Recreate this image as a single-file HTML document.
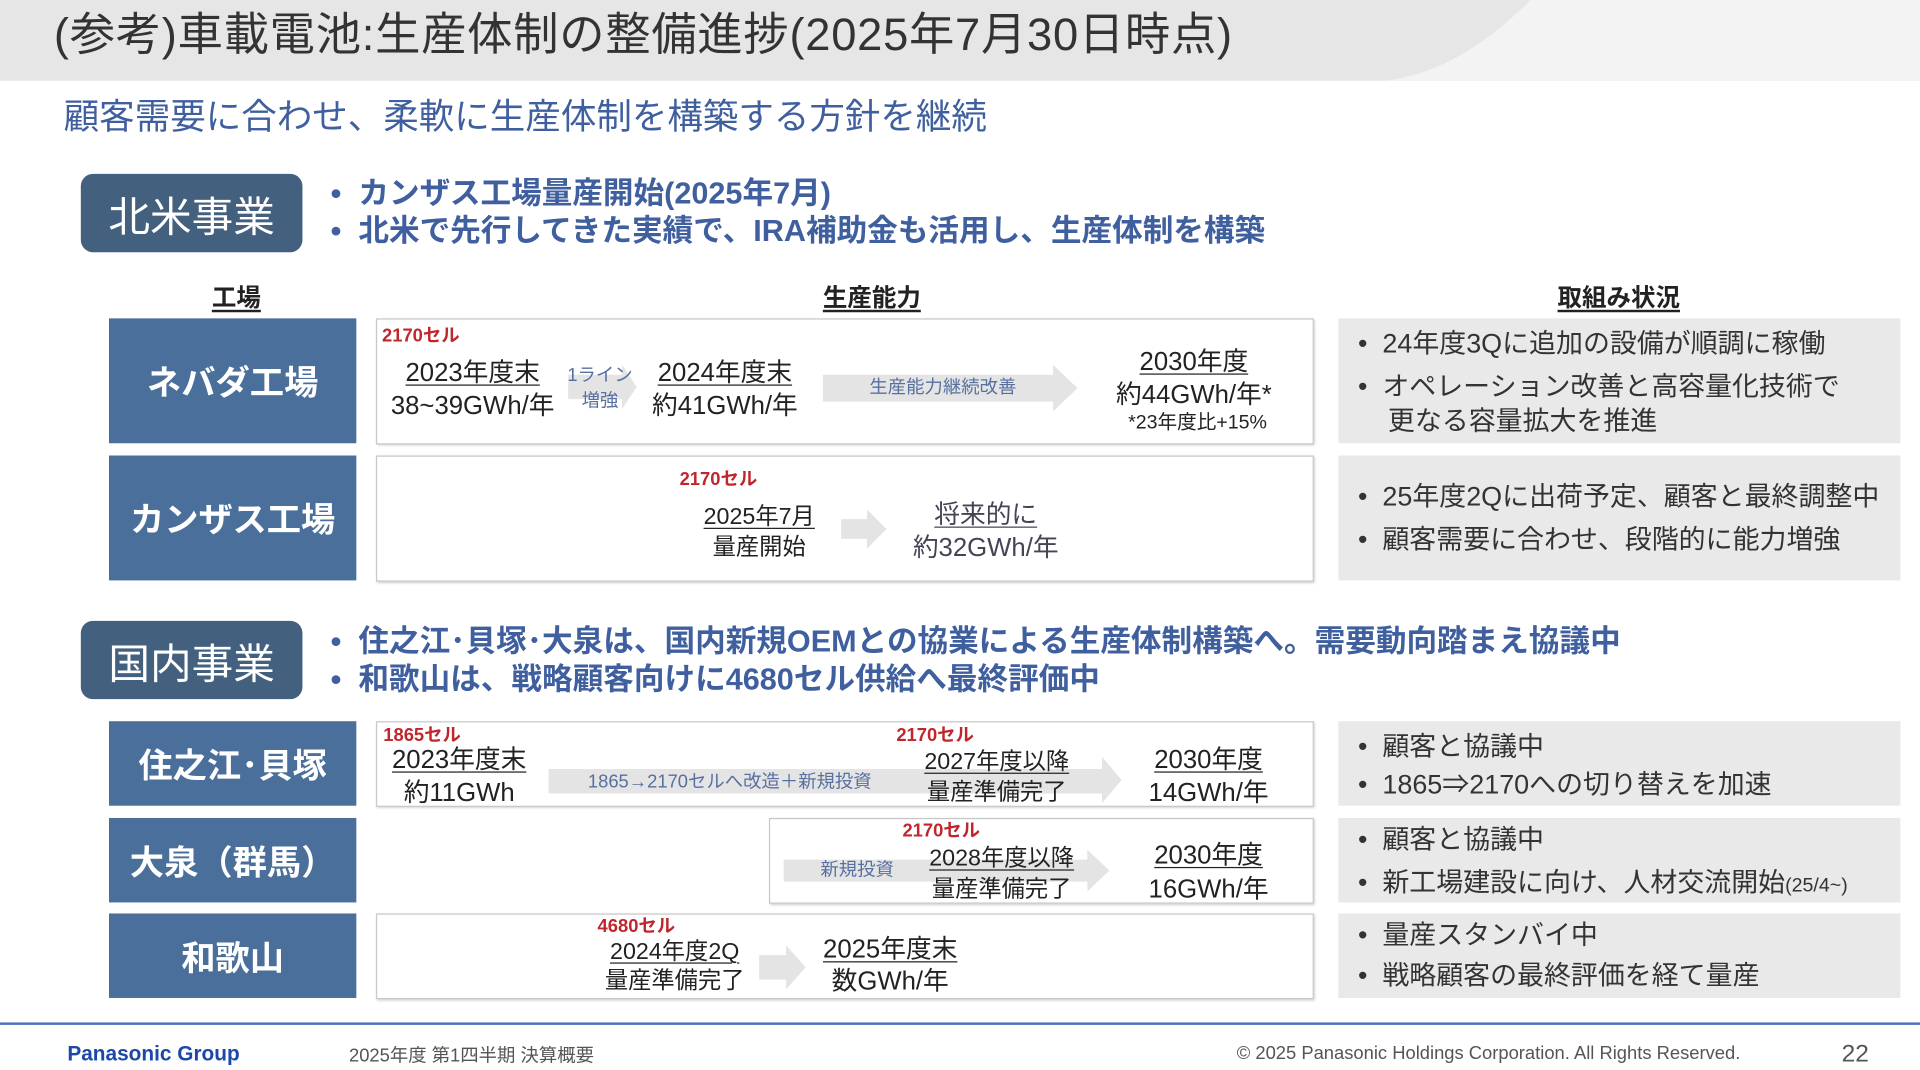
<!DOCTYPE html>
<html><head><meta charset="utf-8"><style>
html,body{margin:0;padding:0;width:1920px;height:1070px;overflow:hidden;background:#fff}
#w{position:absolute;left:0;top:0;width:1568px;height:874px;transform:scale(1.22449);transform-origin:0 0;font-family:"Liberation Sans","Noto Sans CJK JP",sans-serif;color:#222}
.a{position:absolute;white-space:nowrap;line-height:1}
.c{transform:translateX(-50%)}
.u{text-decoration:underline;text-decoration-thickness:1px;text-underline-offset:3px}
.red{color:#c0272d;font-size:15px;font-weight:bold}
.y{font-size:21px}
.lab{position:absolute;left:89px;width:202px;background:#4a6f9b;color:#fff;font-size:28px;font-weight:bold;display:flex;align-items:center;justify-content:center}
.mid{position:absolute;border:1px solid #c8c8c8;background:#fff;box-shadow:1px 1px 2px #ccc}
.rt{position:absolute;left:1093px;width:459px;background:#e9e9e9}
.rt div{position:absolute;left:16px;font-size:22px;color:#333;white-space:nowrap;line-height:1}
.sec{position:absolute;left:66px;width:181px;height:64px;background:#44607f;border-radius:10px;color:#fff;font-size:34px;display:flex;align-items:center;justify-content:center}
.bl{position:absolute;left:270px;font-size:25px;font-weight:bold;color:#3f5f9f;white-space:nowrap;line-height:1}
.h{position:absolute;top:227px;font-size:20px;font-weight:bold;transform:translateX(-50%);text-decoration:underline;text-underline-offset:3px}
.arr{position:absolute}
.at{color:#5870a0;font-size:15px}
</style></head><body><div id="w">
<svg class="arr" style="left:0;top:0" width="1568" height="66"><rect width="1568" height="66" fill="#e6e6e6"/><path d="M1250 0 L1568 0 L1568 66 L1130 66 Q1190 60 1250 0Z" fill="#f3f3f3"/></svg>
<div class="a" style="left:44px;top:10px;font-size:37px;letter-spacing:0.6px;color:#333">(参考)車載電池:生産体制の整備進捗(2025年7月30日時点)</div>
<div class="a" style="left:52px;top:82px;font-size:29px;color:#3f5f9f">顧客需要に合わせ、柔軟に生産体制を構築する方針を継続</div>

<div class="sec" style="top:142px">北米事業</div>
<div class="bl" style="top:146px">•&nbsp; カンザス工場量産開始(2025年7月)</div>
<div class="bl" style="top:177px">•&nbsp; 北米で先行してきた実績で、IRA補助金も活用し、生産体制を構築</div>
<div class="h" style="left:193px">工場</div>
<div class="h" style="left:712px">生産能力</div>
<div class="h" style="left:1322px">取組み状況</div>

<div class="lab" style="top:260px;height:102px">ネバダ工場</div>
<div class="mid" style="left:307px;top:260px;width:764px;height:101px"></div>
<div class="rt" style="top:260px;height:102px"><div style="top:10px">•&nbsp; 24年度3Qに追加の設備が順調に稼働</div><div style="top:45px">•&nbsp; オペレーション改善と高容量化技術で</div><div style="top:73px">&nbsp;&nbsp;&nbsp; 更なる容量拡大を推進</div></div>
<div class="lab" style="top:372px;height:102px">カンザス工場</div>
<div class="mid" style="left:307px;top:372px;width:764px;height:101px"></div>
<div class="rt" style="top:372px;height:102px"><div style="top:23px">•&nbsp; 25年度2Qに出荷予定、顧客と最終調整中</div><div style="top:58px">•&nbsp; 顧客需要に合わせ、段階的に能力増強</div></div>

<div class="sec" style="top:507px">国内事業</div>
<div class="bl" style="top:512px">•&nbsp; 住之江･貝塚･大泉は、国内新規OEMとの協業による生産体制構築へ。需要動向踏まえ協議中</div>
<div class="bl" style="top:543px">•&nbsp; 和歌山は、戦略顧客向けに4680セル供給へ最終評価中</div>

<div class="lab" style="top:589px;height:69px">住之江･貝塚</div>
<div class="mid" style="left:307px;top:589px;width:764px;height:68px"></div>
<div class="rt" style="top:589px;height:69px"><div style="top:10px">•&nbsp; 顧客と協議中</div><div style="top:41px">•&nbsp; 1865⇒2170への切り替えを加速</div></div>
<div class="lab" style="top:668px;height:69px">大泉（群馬）</div>
<div class="mid" style="left:628px;top:668px;width:443px;height:68px"></div>
<div class="rt" style="top:668px;height:69px"><div style="top:7px">•&nbsp; 顧客と協議中</div><div style="top:42px">•&nbsp; 新工場建設に向け、人材交流開始<span style="font-size:16px">(25/4~)</span></div></div>
<div class="lab" style="top:746px;height:69px">和歌山</div>
<div class="mid" style="left:307px;top:746px;width:764px;height:68px"></div>
<div class="rt" style="top:746px;height:69px"><div style="top:7px">•&nbsp; 量産スタンバイ中</div><div style="top:40px">•&nbsp; 戦略顧客の最終評価を経て量産</div></div>

<svg class="arr" style="left:0;top:0" width="1568" height="874">
<g fill="#e4e4e4">
<polygon points="464,306 508,306 508,298 520,316 508,334 508,326 464,326"/>
<polygon points="672,306 860,306 860,298 880,317 860,336 860,328 672,328"/>
<polygon points="687,424 708,424 708,416 724,432 708,448 708,440 687,440"/>
<polygon points="448,628 900,628 900,618 916,637 900,656 900,648 448,648"/>
<polygon points="640,702 888,702 888,694 906,711 888,728 888,720 640,720"/>
<polygon points="620,780 642,780 642,772 658,790 642,808 642,800 620,800"/>
</g>
</svg>
<div class="a red" style="left:312px;top:267px">2170セル</div>
<div class="a c y u" style="left:386px;top:294px">2023年度末</div>
<div class="a c y" style="left:386px;top:321px">38~39GWh/年</div>
<div class="a c at" style="left:490px;top:299px">1ライン</div>
<div class="a c at" style="left:490px;top:320px">増強</div>
<div class="a c y u" style="left:592px;top:294px">2024年度末</div>
<div class="a c y" style="left:592px;top:321px">約41GWh/年</div>
<div class="a c at" style="left:770px;top:309px">生産能力継続改善</div>
<div class="a c y u" style="left:975px;top:285px">2030年度</div>
<div class="a c y" style="left:975px;top:312px">約44GWh/年*</div>
<div class="a c" style="left:978px;top:338px;font-size:16px">*23年度比+15%</div>
<div class="a red" style="left:555px;top:384px">2170セル</div>
<div class="a c u" style="left:620px;top:413px;font-size:19px">2025年7月</div>
<div class="a c" style="left:620px;top:438px;font-size:19px">量産開始</div>
<div class="a c y u" style="left:805px;top:410px;color:#445">将来的に</div>
<div class="a c y" style="left:805px;top:437px;color:#445">約32GWh/年</div>
<div class="a red" style="left:313px;top:593px">1865セル</div>
<div class="a c y u" style="left:375px;top:610px">2023年度末</div>
<div class="a c y" style="left:375px;top:637px">約11GWh</div>
<div class="a c at" style="left:596px;top:631px">1865→2170セルへ改造＋新規投資</div>
<div class="a red" style="left:732px;top:593px">2170セル</div>
<div class="a c u" style="left:814px;top:613px;font-size:19px">2027年度以降</div>
<div class="a c" style="left:814px;top:638px;font-size:19px">量産準備完了</div>
<div class="a c y u" style="left:987px;top:610px">2030年度</div>
<div class="a c y" style="left:987px;top:637px">14GWh/年</div>
<div class="a red" style="left:737px;top:671px">2170セル</div>
<div class="a c at" style="left:700px;top:703px">新規投資</div>
<div class="a c u" style="left:818px;top:692px;font-size:19px">2028年度以降</div>
<div class="a c" style="left:818px;top:717px;font-size:19px">量産準備完了</div>
<div class="a c y u" style="left:987px;top:688px">2030年度</div>
<div class="a c y" style="left:987px;top:716px">16GWh/年</div>
<div class="a red" style="left:488px;top:749px">4680セル</div>
<div class="a c u" style="left:551px;top:768px;font-size:19px">2024年度2Q</div>
<div class="a c" style="left:551px;top:792px;font-size:19px">量産準備完了</div>
<div class="a c y u" style="left:727px;top:765px">2025年度末</div>
<div class="a c y" style="left:727px;top:791px">数GWh/年</div>

<div style="position:absolute;left:0;top:835px;width:1568px;height:2px;background:#4a70c2"></div>
<div class="a" style="left:55px;top:852px;font-size:17px;font-weight:bold;color:#1a47a8">Panasonic Group</div>
<div class="a" style="left:285px;top:855px;font-size:15px;color:#555">2025年度 第1四半期 決算概要</div>
<div class="a" style="left:1010px;top:853px;font-size:15px;color:#555">© 2025 Panasonic Holdings Corporation. All Rights Reserved.</div>
<div class="a" style="left:1504px;top:851px;font-size:20px;color:#555">22</div>
</div></body></html>
